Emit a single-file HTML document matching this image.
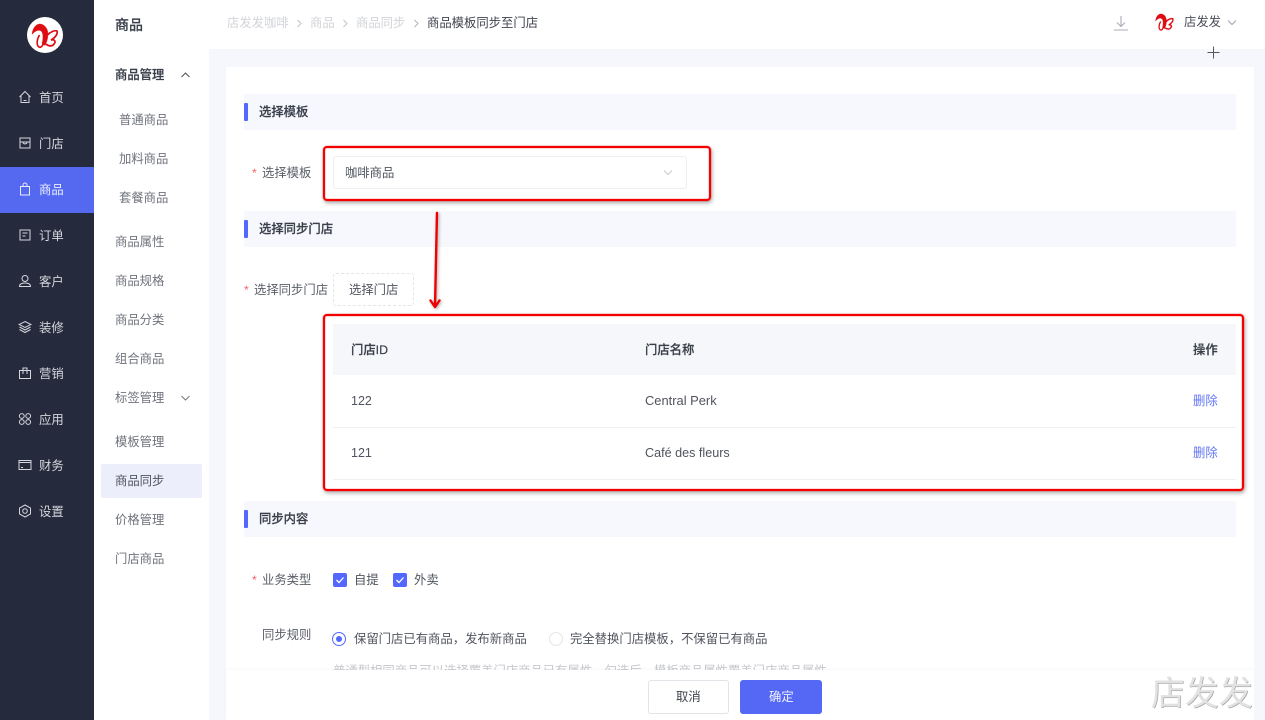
<!DOCTYPE html>
<html lang="zh-CN"><head><meta charset="utf-8"><title>商品模板同步至门店</title>
<style>
html,body{margin:0;padding:0;background:#fff}
body{width:1265px;height:720px;overflow:hidden;position:relative;font-family:"Liberation Sans","Noto Sans CJK SC",sans-serif;font-size:12.35px;color:#3a3f4b}
div,span,svg{position:absolute;box-sizing:border-box}
.t{white-space:nowrap;line-height:20px;height:20px}
.side{left:39px;color:#d5d7dd}
.ic{left:18px;width:14px;height:14px;fill:none;stroke:#d5d7dd;stroke-width:1}
.m{color:#6f737c}
.sec{left:244px;width:992px;height:36px;background:#f7f8fd}
.sec i{position:absolute;left:0;top:9px;width:4px;height:18px;background:#5468ff;border-radius:1px}
.sec b{position:absolute;left:15px;top:8px;line-height:20px;font-weight:500;color:#3a3f4b;white-space:nowrap;-webkit-text-stroke:.2px #3a3f4b}
.lb{color:#5a5e68}
.st{color:#f4646a}
.red{border:2px solid #f40000;border-radius:4px;box-shadow:0 0 1px #f40000,inset 0 0 1px #f40000,1px 2px 4px rgba(0,0,0,.35)}
.cb{width:14px;height:14px;background:#5468ff;border-radius:2px}
.h{font-weight:500;color:#3a3f4b;-webkit-text-stroke:.2px #3a3f4b}
</style></head><body>
<!-- background -->
<div style="left:209px;top:49px;width:1056px;height:671px;background:#f6f7fc"></div>
<div style="left:226px;top:67px;width:1028px;height:653px;background:#fff"></div>

<!-- primary sidebar -->
<div style="left:0;top:0;width:94px;height:720px;background:#252b3d"></div>
<div style="left:27px;top:17px;width:36px;height:36px;border-radius:50%;background:#fff"></div>
<svg style="left:27px;top:17px" width="36" height="36" viewBox="0 0 36 36" fill="none" stroke="#dd0d12"><path d="M5 17.500C5.500 10 10 6.500 13.500 7 18 7.500 21 12 21 17 21 21 20 25 18 28.500L15 27C16 22 16.500 17 14.500 14.500 12.500 12.500 9 13 5 17.500z" fill="#dd0d12" stroke-width=".3"/><path d="M17 24C16 29 14 31 12 30 9 28 10 22 12.500 18" stroke-width="1.600"/><path d="M20.500 18C23 15 28 13 30 14 31 17 28 21 24 23 28 22 29 25 27 27 25 30 21 29 19 27" stroke-width="1.700"/></svg>

<div style="left:0;top:167px;width:94px;height:46px;background:#5468f0"></div>

<svg class="ic" style="top:90px" viewBox="0 0 14 14"><path d="M1.500 7 7 1.500 12.500 7M3 6v6.500h8V6M5.500 10.500h3"/></svg>
<div class="t side" style="top:88px">首页</div>
<svg class="ic" style="top:136px" viewBox="0 0 14 14"><path d="M2 2h10v10H2zM2 6h10M5 6c0 2.500 4 2.500 4 0"/></svg>
<div class="t side" style="top:134px">门店</div>
<svg class="ic" style="top:182px;stroke:#e8eaff" viewBox="0 0 14 14"><path d="M2.500 4.500h9v8.500h-9zM5 4.500V3a2 2 0 0 1 4 0v1.500"/></svg>
<div class="t side" style="top:180px;color:#eef0ff">商品</div>
<svg class="ic" style="top:228px" viewBox="0 0 14 14"><path d="M2 2h10v10H2zM4.500 5h5M4.500 8h3"/></svg>
<div class="t side" style="top:226px">订单</div>
<svg class="ic" style="top:274px" viewBox="0 0 14 14"><circle cx="7" cy="4.500" r="3"/><path d="M1.500 12.500c0-2.500 2-3.500 5.500-3.500s5.500 1 5.500 3.500z"/></svg>
<div class="t side" style="top:272px">客户</div>
<svg class="ic" style="top:320px" viewBox="0 0 14 14"><path d="M7 1.500 13 4.500 7 7.500 1 4.500zM1.500 7 7 10 12.500 7M1.500 9.500 7 12.500 12.500 9.500"/></svg>
<div class="t side" style="top:318px">装修</div>
<svg class="ic" style="top:366px" viewBox="0 0 14 14"><path d="M1.500 4.500h11v8h-11zM5 8V2h4v6"/></svg>
<div class="t side" style="top:364px">营销</div>
<svg class="ic" style="top:412px" viewBox="0 0 14 14"><circle cx="3.800" cy="4" r="2.400"/><circle cx="10.200" cy="4" r="2.400"/><circle cx="3.800" cy="10" r="2.400"/><circle cx="10.200" cy="10" r="2.400"/></svg>
<div class="t side" style="top:410px">应用</div>
<svg class="ic" style="top:458px" viewBox="0 0 14 14"><path d="M1 2.500h12v9H1zM1 4.500h12M3 9.500h2"/></svg>
<div class="t side" style="top:456px">财务</div>
<svg class="ic" style="top:504px" viewBox="0 0 14 14"><path d="M7 1 12.500 4v6L7 13 1.500 10V4z"/><circle cx="7" cy="7" r="2.300"/></svg>
<div class="t side" style="top:502px">设置</div>

<!-- secondary sidebar -->
<div class="t h" style="left:115px;top:15px;font-size:14px">商品</div>
<div class="t h" style="left:115px;top:65px">商品管理</div>
<svg style="left:180px;top:71px" width="11" height="8" viewBox="0 0 11 8" fill="none" stroke="#555" stroke-width="1.100"><path d="M1.500 6 5.500 2l4 4"/></svg>
<div class="t m" style="left:119px;top:110px">普通商品</div>
<div class="t m" style="left:119px;top:149px">加料商品</div>
<div class="t m" style="left:119px;top:188px">套餐商品</div>
<div class="t m" style="left:115px;top:232px">商品属性</div>
<div class="t m" style="left:115px;top:271px">商品规格</div>
<div class="t m" style="left:115px;top:310px">商品分类</div>
<div class="t m" style="left:115px;top:349px">组合商品</div>
<div class="t m" style="left:115px;top:388px">标签管理</div>
<svg style="left:180px;top:394px" width="11" height="8" viewBox="0 0 11 8" fill="none" stroke="#777" stroke-width="1"><path d="M1.500 2 5.500 6l4-4"/></svg>
<div class="t m" style="left:115px;top:432px">模板管理</div>
<div style="left:101px;top:464px;width:101px;height:34px;background:#eceefb;border-radius:2px"></div>
<div class="t" style="left:115px;top:471px;color:#50545e">商品同步</div>
<div class="t m" style="left:115px;top:510px">价格管理</div>
<div class="t m" style="left:115px;top:549px">门店商品</div>

<!-- breadcrumb -->
<div class="t" style="left:227px;top:13px;color:#d2d4d9">店发发咖啡</div>
<svg style="left:296px;top:19px" width="7" height="9" viewBox="0 0 7 9" fill="none" stroke="#c0c3c9" stroke-width="1"><path d="M1.500 1 5 4.500 1.500 8"/></svg>
<div class="t" style="left:310px;top:13px;color:#d2d4d9">商品</div>
<svg style="left:342px;top:19px" width="7" height="9" viewBox="0 0 7 9" fill="none" stroke="#c0c3c9" stroke-width="1"><path d="M1.500 1 5 4.500 1.500 8"/></svg>
<div class="t" style="left:356px;top:13px;color:#d2d4d9">商品同步</div>
<svg style="left:413px;top:19px" width="7" height="9" viewBox="0 0 7 9" fill="none" stroke="#b0b3ba" stroke-width="1"><path d="M1.500 1 5 4.500 1.500 8"/></svg>
<div class="t" style="left:427px;top:13px;color:#3f434d">商品模板同步至门店</div>

<!-- header right -->
<svg style="left:1113px;top:15px" width="16" height="16" viewBox="0 0 16 16" fill="none" stroke="#a9adb6" stroke-width="1.100"><path d="M8 1v10M4 7.500 8 11.500 12 7.500M1 15h14"/></svg>
<svg style="left:1152px;top:9px" width="25" height="25" viewBox="0 0 36 36" fill="none" stroke="#dd0d12"><path d="M5 17.500C5.500 10 10 6.500 13.500 7 18 7.500 21 12 21 17 21 21 20 25 18 28.500L15 27C16 22 16.500 17 14.500 14.500 12.500 12.500 9 13 5 17.500z" fill="#dd0d12" stroke-width=".3"/><path d="M17 24C16 29 14 31 12 30 9 28 10 22 12.500 18" stroke-width="1.900"/><path d="M20.500 18C23 15 28 13 30 14 31 17 28 21 24 23 28 22 29 25 27 27 25 30 21 29 19 27" stroke-width="2"/></svg>
<div class="t" style="left:1184px;top:12px;color:#4a4e58">店发发</div>
<svg style="left:1227px;top:19px" width="10" height="7" viewBox="0 0 10 7" fill="none" stroke="#9ea2ab" stroke-width="1"><path d="M1 1.500 5 5.500 9 1.500"/></svg>
<svg style="left:1207px;top:46px" width="13" height="13" viewBox="0 0 13 13" fill="none" stroke="#55585f" stroke-width="1"><path d="M6.500.5v12M.5 6.500h12"/></svg>

<!-- section 1 -->
<div class="sec" style="top:94px"><i></i><b>选择模板</b></div>
<div class="t st" style="left:252px;top:163px">*</div>
<div class="t lb" style="left:262px;top:163px">选择模板</div>
<div style="left:333px;top:156px;width:354px;height:33px;background:#fff;border:1px solid #eceef2;border-radius:3px"></div>
<div class="t" style="left:345px;top:163px;color:#50545e">咖啡商品</div>
<svg style="left:663px;top:169px" width="10" height="7" viewBox="0 0 10 7" fill="none" stroke="#c8cbd1" stroke-width="1"><path d="M1 1.500 5 5.500 9 1.500"/></svg>
<div class="red" style="left:323px;top:146px;width:388px;height:55px"></div>

<!-- section 2 -->
<div class="sec" style="top:211px"><i></i><b style="top:7.500px">选择同步门店</b></div>
<div class="t st" style="left:244px;top:280px">*</div>
<div class="t lb" style="left:254px;top:280px">选择同步门店</div>
<div style="left:333px;top:273px;width:81px;height:33px;border:1px dashed #e3e5ea;border-radius:3px"></div>
<div class="t" style="left:349px;top:280px;color:#50545e">选择门店</div>

<!-- arrow -->
<svg style="left:420px;top:205px;filter:drop-shadow(1px 1px 1.500px rgba(0,0,0,.35))" width="30" height="110" viewBox="0 0 30 110" fill="none" stroke="#f00000" stroke-width="2.400" stroke-linecap="round" stroke-linejoin="round"><path d="M17 8 15 102M10.500 95.500 15 102 19.500 95.500"/></svg>

<!-- table -->
<div style="left:333px;top:324px;width:903px;height:51px;background:#f6f7fa"></div>
<div style="left:333px;top:427px;width:903px;height:1px;background:#f0f1f3"></div>
<div style="left:333px;top:479px;width:903px;height:1px;background:#f0f1f3"></div>
<div class="t h" style="left:351px;top:340px">门店ID</div>
<div class="t h" style="left:645px;top:340px">门店名称</div>
<div class="t h" style="left:1193px;top:340px">操作</div>
<div class="t" style="left:351px;top:391px;color:#50545e;font-size:12.500px">122</div>
<div class="t" style="left:645px;top:391px;color:#50545e;font-size:12.900px">Central Perk</div>
<div class="t" style="left:1193px;top:391px;color:#5f74f5">删除</div>
<div class="t" style="left:351px;top:443px;color:#50545e;font-size:12.500px">121</div>
<div class="t" style="left:645px;top:443px;color:#50545e;font-size:12.600px">Café des fleurs</div>
<div class="t" style="left:1193px;top:443px;color:#5f74f5">删除</div>
<div class="red" style="left:323px;top:314px;width:921px;height:177px"></div>

<!-- section 3 -->
<div class="sec" style="top:501px"><i></i><b>同步内容</b></div>
<div class="t st" style="left:252px;top:570px">*</div>
<div class="t lb" style="left:262px;top:570px">业务类型</div>
<div class="cb" style="left:333px;top:573px"></div>
<svg style="left:333px;top:573px" width="14" height="14" viewBox="0 0 14 14" fill="none" stroke="#fff" stroke-width="1.300"><path d="M3.500 7 6 9.500 10.500 4.500"/></svg>
<div class="t" style="left:354px;top:570px;color:#50545e">自提</div>
<div class="cb" style="left:393px;top:573px"></div>
<svg style="left:393px;top:573px" width="14" height="14" viewBox="0 0 14 14" fill="none" stroke="#fff" stroke-width="1.300"><path d="M3.500 7 6 9.500 10.500 4.500"/></svg>
<div class="t" style="left:414px;top:570px;color:#50545e">外卖</div>

<div class="t lb" style="left:262px;top:625px">同步规则</div>
<div style="left:332px;top:632px;width:14px;height:14px;border-radius:50%;border:1px solid #5468ff"></div>
<div style="left:336px;top:636px;width:6px;height:6px;border-radius:50%;background:#5468ff"></div>
<div class="t" style="left:354px;top:629px;color:#50545e">保留门店已有商品，发布新商品</div>
<div style="left:549px;top:632px;width:14px;height:14px;border-radius:50%;border:1px solid #e3e5ea"></div>
<div class="t" style="left:570px;top:629px;color:#50545e">完全替换门店模板，不保留已有商品</div>
<div class="t" style="left:333px;top:661px;color:#c6c8ce">普通型相同商品可以选择覆盖门店商品已有属性，勾选后，模板商品属性覆盖门店商品属性</div>

<!-- footer -->
<div style="left:226px;top:670px;width:1028px;height:50px;background:#fff;box-shadow:0 -1px 3px rgba(0,0,0,.03)"></div>
<div style="left:648px;top:680px;width:81px;height:34px;background:#fff;border:1px solid #e2e4e9;border-radius:3px"></div>
<div class="t" style="left:676px;top:687px;color:#3f434d">取消</div>
<div style="left:740px;top:680px;width:82px;height:34px;background:#5468f5;border-radius:3px"></div>
<div class="t" style="left:769px;top:687px;color:#f0f2ff">确定</div>

<!-- watermark -->
<div style="left:1254px;top:670px;width:11px;height:50px;background:#f6f7fc"></div>
<div class="t" style="left:1151px;top:674px;height:40px;line-height:40px;font-size:34px;color:#e2e2e2;text-shadow:.5px .5px .5px #8a8a8a;width:114px;overflow:hidden">店发发</div>
</body></html>
